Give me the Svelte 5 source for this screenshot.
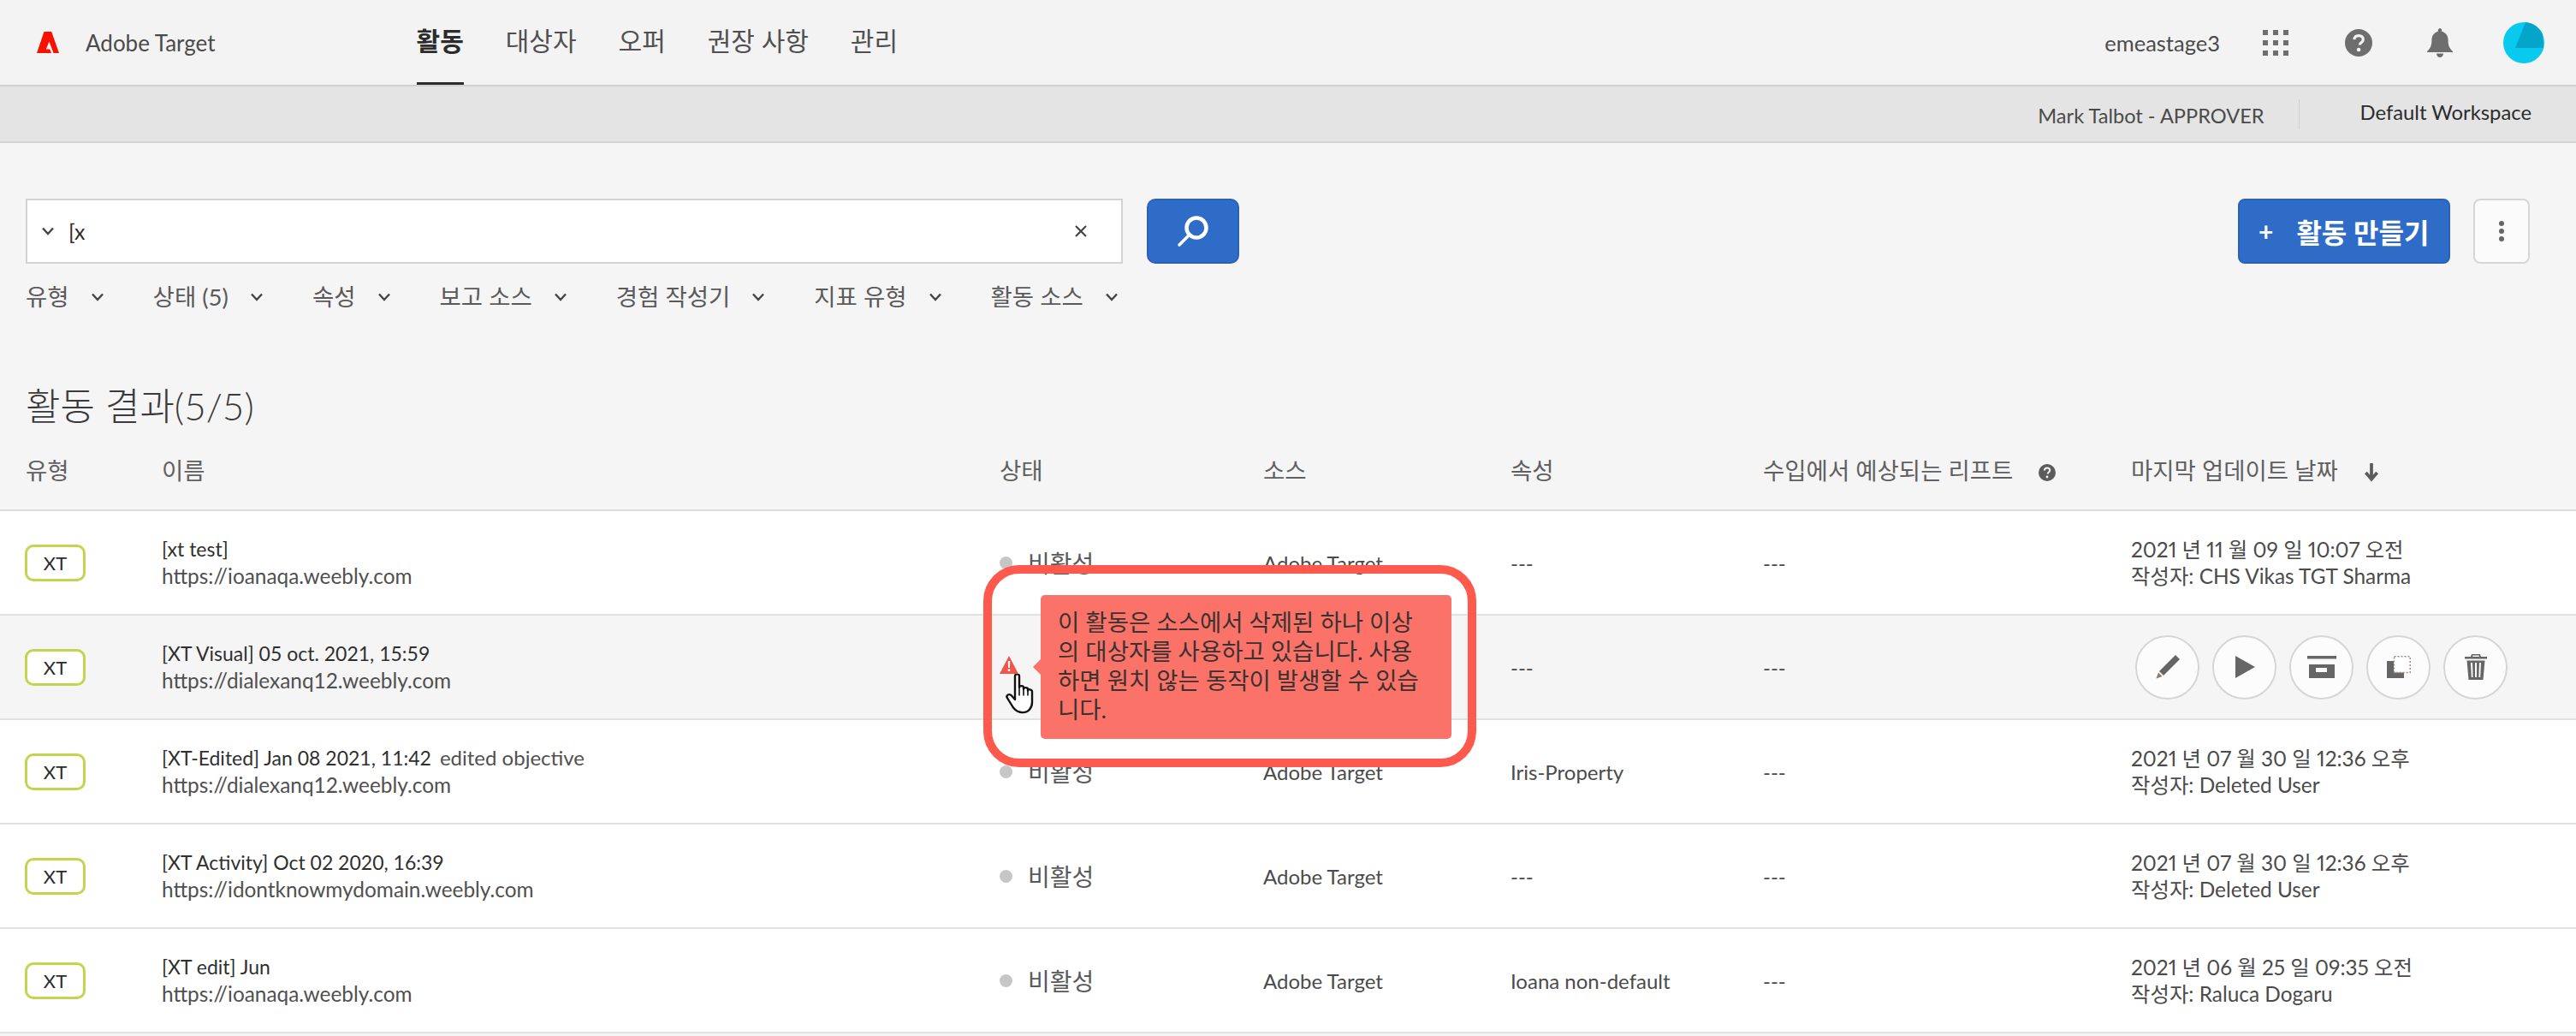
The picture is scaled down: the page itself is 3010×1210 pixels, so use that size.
<script lang="ts">
  const nav = ['활동', '대상자', '오퍼', '권장 사항', '관리'];
  const filters = ['유형', '상태 (5)', '속성', '보고 소스', '경험 작성기', '지표 유형', '활동 소스'];

  const rows = [
    { name: '[xt test]', url: 'https://ioanaqa.weebly.com', prop: '---', date: '2021 년 11 월 09 일 10:07 오전', by: 'CHS Vikas TGT Sharma' },
    { name: '[XT Visual] 05 oct. 2021, 15:59', url: 'https://dialexanq12.weebly.com', prop: '---', hover: true },
    { name: '[XT-Edited] Jan 08 2021, 11:42', note: 'edited objective', url: 'https://dialexanq12.weebly.com', prop: 'Iris-Property', date: '2021 년 07 월 30 일 12:36 오후', by: 'Deleted User' },
    { name: '[XT Activity] Oct 02 2020, 16:39', url: 'https://idontknowmydomain.weebly.com', prop: '---', date: '2021 년 07 월 30 일 12:36 오후', by: 'Deleted User' },
    { name: '[XT edit] Jun', url: 'https://ioanaqa.weebly.com', prop: 'Ioana non-default', date: '2021 년 06 월 25 일 09:35 오전', by: 'Raluca Dogaru' }
  ];
</script>

{#snippet chevron()}
  <svg class="chev" width="16" height="10" viewBox="0 0 16 10" fill="none" stroke="currentColor" stroke-width="2.4"><path d="M2 1.5 8 8l6-6.5"/></svg>
{/snippet}

<div class="page">
  <header class="topbar">
    <svg class="logo" width="26" height="25" viewBox="0 0 26 25" fill="#fa0f00"><path d="M8.500 0H17.200L26 25H19.600L14.500 11.500 10.800 20.600H15.200L17 25H0z"/></svg>
    <span class="product">Adobe Target</span>
    <nav class="nav">
      {#each nav as item, i}
        <span class="nav-item" class:active={i === 0}>{item}</span>
      {/each}
    </nav>
    <div class="top-right">
      <span class="tenant">emeastage3</span>
      <svg class="ic-grid" width="30" height="30" viewBox="0 0 30 30" fill="#6e6e6e">
        <rect x="0" y="0" width="6" height="6"/><rect x="12" y="0" width="6" height="6"/><rect x="24" y="0" width="6" height="6"/>
        <rect x="0" y="12" width="6" height="6"/><rect x="12" y="12" width="6" height="6"/><rect x="24" y="12" width="6" height="6"/>
        <rect x="0" y="24" width="6" height="6"/><rect x="12" y="24" width="6" height="6"/><rect x="24" y="24" width="6" height="6"/>
      </svg>
      <svg class="ic-help" width="32" height="32" viewBox="0 0 32 32">
        <circle cx="16" cy="16" r="16" fill="#6e6e6e"/>
        <path d="M10.800 12.200c.3-2.900 2.400-4.600 5.400-4.600 3 0 5.100 1.700 5.100 4.300 0 2-1.100 3.100-2.500 4.100-1.100.8-1.400 1.300-1.400 2.600" fill="none" stroke="#f3f3f3" stroke-width="3.200"/>
        <circle cx="16.100" cy="24" r="2.300" fill="#f3f3f3"/>
      </svg>
      <svg class="ic-bell" width="30" height="34" viewBox="0 0 30 34" fill="#6e6e6e">
        <path d="M15 0c1.300 0 2.200 1 2.200 2.300v1.500C22 5 24.600 9 24.600 14c0 6 1.500 9.500 5.400 13v1H0v-1c3.900-3.500 5.400-7 5.400-13 0-5 2.600-9 7.400-10.200V2.300C12.800 1 13.700 0 15 0z"/>
        <path d="M11 29.500h8c0 2.500-1.800 4.500-4 4.500s-4-2-4-4.500z"/>
      </svg>
      <svg class="avatar" width="48" height="48" viewBox="0 0 48 48">
        <circle cx="24" cy="24" r="24" fill="#0ac9ef"/>
        <path d="M26 0a24 24 0 0 1 20 14l1 16H14z" fill="#04a5c9"/>
      </svg>
    </div>
  </header>

  <div class="subbar">
    <span class="role">Mark Talbot - APPROVER</span>
    <span class="workspace">Default Workspace</span>
  </div>

  <main class="content">
    <div class="toolbar">
      <div class="search">
        <svg class="search-chev" width="16" height="10" viewBox="0 0 16 10" fill="none" stroke="#444" stroke-width="2.4"><path d="M2 1.500 8 8l6-6.500"/></svg>
        <span class="query">[x</span>
        <svg class="clear" width="16" height="16" viewBox="0 0 16 16" stroke="#444" stroke-width="2.200"><path d="M2 2l12 12M14 2 2 14"/></svg>
      </div>
      <button class="search-btn" type="button" aria-label="검색">
        <svg width="38" height="38" viewBox="0 0 38 38" fill="none" stroke="#fff"><circle cx="23" cy="15" r="11.500" stroke-width="4.500"/><path d="M14.500 23.500 3 35" stroke-width="3.600" stroke-linecap="round"/></svg>
      </button>
      <button class="create" type="button"><span class="plus">+</span>활동 만들기</button>
      <button class="more" type="button" aria-label="더 보기">
        <svg width="6" height="24" viewBox="0 0 6 24" fill="#666"><circle cx="3" cy="3" r="3"/><circle cx="3" cy="12" r="3"/><circle cx="3" cy="21" r="3"/></svg>
      </button>
    </div>

    <div class="filters">
      {#each filters as f}
        <span class="filter">{f}{@render chevron()}</span>
      {/each}
    </div>

    <h1 class="title">활동 결과(5/5)</h1>

    <div class="row head">
      <span>유형</span>
      <span>이름</span>
      <span>상태</span>
      <span>소스</span>
      <span>속성</span>
      <span class="head-lift">수입에서 예상되는 리프트
        <svg width="20" height="20" viewBox="0 0 20 20"><circle cx="10" cy="10" r="10" fill="#5c5c5c"/><path d="M6.800 7.500c.2-1.800 1.500-2.900 3.300-2.900s3.100 1 3.100 2.600c0 1.200-.7 1.900-1.500 2.500-.7.500-.9.800-.9 1.700" fill="none" stroke="#f5f5f5" stroke-width="2"/><circle cx="10" cy="15" r="1.400" fill="#f5f5f5"/></svg>
      </span>
      <span class="head-date">마지막 업데이트 날짜
        <svg width="20" height="22" viewBox="0 0 18 20" fill="none" stroke="#5c5c5c" stroke-width="3.400"><path d="M9 0v16M3 10l6 7 6-7"/></svg>
      </span>
    </div>

    {#each rows as r}
      <div class="row item" class:hover={r.hover}>
        <span><span class="badge">XT</span></span>
        <div class="name">
          <div class="name-line">{r.name}{#if r.note}<span class="note">{r.note}</span>{/if}</div>
          <div class="url">{r.url}</div>
        </div>
        <div class="status">
          {#if r.hover}
            <svg class="warn" width="22" height="21" viewBox="0 0 22 21"><path d="M11 0 22 21H0z" fill="#f0554c"/><path d="M9.800 6h2.400l-.3 8h-1.800zM9.800 15.500h2.400V18H9.800z" fill="#fff"/></svg>
          {:else}
            <i class="dot"></i>
            비활성
          {/if}
        </div>
        <span>{r.hover ? '' : 'Adobe Target'}</span>
        <span>{r.prop}</span>
        <span>---</span>
        {#if r.hover}
          <div class="actions">
            <button class="act" type="button" aria-label="편집">
              <svg width="30" height="30" viewBox="0 0 30 30" fill="#666"><path d="M24 1l5 5L10 25l-5-5z"/><path d="M4 21.500 8.500 26 1.500 28.500z" fill="#8a7a70"/></svg>
            </button>
            <button class="act" type="button" aria-label="활성화">
              <svg width="24" height="26" viewBox="0 0 24 26" fill="#666"><path d="M1 0l23 13L1 26z"/></svg>
            </button>
            <button class="act" type="button" aria-label="보관">
              <svg width="34" height="26" viewBox="0 0 34 26" fill="#666"><path d="M0 0h34v3.500H0z"/><path fill-rule="evenodd" d="M2 10h30v16H2zM10 14v5h13v-5z"/></svg>
            </button>
            <button class="act" type="button" aria-label="복사">
              <svg width="28" height="26" viewBox="0 0 28 26"><path d="M0 6h8v13h12v7H0z" fill="#666"/><path d="M8.500.8h18.700v18.700H8.500z" fill="#fff" stroke="#a88" stroke-width="1.500" stroke-dasharray="2 2"/></svg>
            </button>
            <button class="act" type="button" aria-label="삭제">
              <svg width="26" height="30" viewBox="0 0 26 30" fill="#666"><path d="M8 0h10l1 3h7v2.500H0V3h7zM9.500 1.500 9 3h8l-.5-1.500z"/><path fill-rule="evenodd" d="M2.500 7.500h21L21.500 30h-17zM7 10l.8 17h1.800L9 10zM12 10v17h2V10zM17 10l-.6 17h1.800L19 10z"/></svg>
            </button>
          </div>
        {:else}
          <div class="updated">
            <div>{r.date}</div>
            <div>작성자: {r.by}</div>
          </div>
        {/if}
      </div>
    {/each}
  </main>

  <div class="callout"></div>
  <div class="tooltip">이 활동은 소스에서 삭제된 하나 이상의 대상자를 사용하고 있습니다. 사용하면 원치 않는 동작이 발생할 수 있습니다.</div>
  <svg class="hand" width="36" height="47" viewBox="0 0 36 50" preserveAspectRatio="none">
    <path d="M11 3c0-3.500 5-3.500 5 0v14c0-2.500 5-2.500 5 0v2c0-2.500 5-2.500 5 0v2c0-2.500 5-2 5 1v13c0 7-4 13-11 13-5 0-8-2-11-6L2 30c-2-3 2-6 5-3l4 5z" fill="#fff" stroke="#111" stroke-width="2.400" stroke-linejoin="round"/>
    <path d="M16 17v10M21 19v8M26 21v6" stroke="#111" stroke-width="1.600" fill="none"/>
  </svg>
</div>

<style>
  :global(body) {
    margin: 0;
    background: #f5f5f5;
  }

  .page {
    position: relative;
    width: 3010px;
    height: 1210px;
    overflow: hidden;
    background: #f5f5f5;
    color: #4b4b4b;
    font-family: "Lato", "Noto Sans CJK KR", sans-serif;
    font-size: 24px;
  }

  .topbar {
    display: flex;
    align-items: center;
    height: 101px;
    padding: 0 37px 0 43px;
    box-sizing: border-box;
    background: #f3f3f3;
    border-bottom: 2px solid #d0d0d0;
  }

  .product {
    margin-left: 31px;
    font-size: 26px;
    color: #4b4b4b;
  }

  .nav {
    display: flex;
    gap: 49px;
    margin-left: 235px;
    align-self: stretch;
  }

  .nav-item {
    display: flex;
    align-items: center;
    padding-bottom: 4px;
    box-sizing: border-box;
    font-size: 30px;
    color: #505050;
    border-bottom: 3px solid transparent;
  }

  .nav-item.active {
    font-weight: 700;
    color: #2c2c2c;
    border-bottom-color: #2c2c2c;
  }

  .top-right {
    display: flex;
    align-items: center;
    margin-left: auto;
  }

  .tenant { font-size: 25.500px; }
  .ic-grid { margin-left: 50px; }
  .ic-help { margin-left: 66px; }
  .ic-bell { margin-left: 64px; }
  .avatar { margin-left: 59px; }

  .subbar {
    display: flex;
    align-items: center;
    justify-content: flex-end;
    height: 66px;
    padding-right: 52px;
    box-sizing: border-box;
    background: #e4e4e4;
    border-bottom: 2px solid #d4d4d4;
    font-size: 23.800px;
  }

  .role {
    padding-right: 40px;
    border-right: 1px solid #cfcfcf;
    line-height: 32px;
    padding-top: 3px;
    font-size: 23.600px;
  }

  .workspace {
    margin-left: 71px;
    color: #2c2c2c;
    margin-bottom: 5px;
  }

  .toolbar {
    display: flex;
    align-items: stretch;
    height: 76px;
    margin: 65px 54px 0 30px;
  }

  .search {
    display: flex;
    align-items: center;
    width: 1282px;
    padding: 0 16px;
    box-sizing: border-box;
    background: #fff;
    border: 2px solid #d3d3d3;
  }

  .search-chev { flex: none; }

  .query {
    margin-left: 16px;
    font-size: 25px;
    color: #2c2c2c;
  }

  .clear { margin-left: auto; margin-right: 23px; }

  .search-btn {
    display: flex;
    align-items: center;
    justify-content: center;
    width: 108px;
    margin-left: 28px;
    padding: 0;
    background: #2f6cc8;
    border: 2px solid #2b62b8;
    border-radius: 10px;
  }

  .create {
    display: flex;
    align-items: center;
    width: 248px;
    margin-left: auto;
    padding: 0 0 0 22px;
    box-sizing: border-box;
    background: #2f6cc8;
    border: 2px solid #2b62b8;
    border-radius: 8px;
    color: #fff;
    font: 700 32px "Lato", "Noto Sans CJK KR", sans-serif;
  }

  .plus {
    margin-right: 27px;
    font-size: 30px;
  }

  .more {
    display: flex;
    align-items: center;
    justify-content: center;
    width: 66px;
    margin-left: 27px;
    padding: 0;
    background: #fbfbfb;
    border: 2px solid #d6d6d6;
    border-radius: 8px;
  }

  .filters {
    display: flex;
    margin: 19px 0 0 30px;
    height: 36px;
    align-items: center;
    color: #5a5a5a;
  }

  .filter {
    display: flex;
    align-items: center;
    margin-right: 57px;
    font-size: 27.500px;
  }

  .chev {
    margin-left: 25px;
    margin-top: 4px;
    color: #444;
  }

  .title {
    margin: 81px 0 0 30px;
    font-size: 44px;
    line-height: 60px;
    font-weight: 300;
    color: #3a3a3a;
  }

  .row {
    display: grid;
    grid-template-columns: 159px 979px 308px 289px 295px 430px 1fr;
    align-items: center;
    padding-left: 30px;
  }

  .head {
    height: 93px;
    padding-bottom: 3px;
    box-sizing: border-box;
    color: #606060;
    font-size: 27.500px;
    border-bottom: 2px solid #dcdcdc;
  }

  .head-lift svg { margin-left: 23px; vertical-align: -2px; }
  .head-date svg { margin-left: 22px; vertical-align: -3px; }

  .item {
    height: 122px;
    box-sizing: border-box;
    background: #fff;
    border-bottom: 2px solid #e2e2e2;
    font-size: 24px;
  }

  .item.hover { background: #f5f5f5; }

  .badge {
    display: flex;
    align-items: center;
    justify-content: center;
    width: 71px;
    height: 43px;
    margin-left: -1px;
    box-sizing: border-box;
    border: 3px solid #c3d44e;
    border-radius: 10px;
    background: #fff;
    color: #2c2c2c;
    font-size: 22px;
  }

  .name { line-height: 32px; }
  .name-line { color: #2f2f2f; font-size: 23px; }
  .note { margin-left: 10px; color: #505050; font-size: 24px; }
  .url { color: #505050; font-size: 24.400px; }

  .status {
    display: flex;
    align-items: center;
    color: #5a5a5a;
    font-size: 28px;
  }

  .dot {
    width: 15px;
    height: 15px;
    margin-right: 18px;
    border-radius: 50%;
    background: #c6c6c6;
  }

  .warn { margin-bottom: 6px; }

  .updated {
    line-height: 31px;
    color: #4b4b4b;
    font-size: 24.400px;
    font-variant-numeric: proportional-nums;
  }

  .actions {
    display: flex;
    gap: 15px;
    margin-left: 5px;
  }

  .act {
    display: flex;
    align-items: center;
    justify-content: center;
    width: 75px;
    height: 75px;
    padding: 0;
    background: #fcfcfc;
    border: 2px solid #d6d6d6;
    border-radius: 50%;
  }

  /* annotation drawn on top of the table */
  .callout {
    position: absolute;
    left: 1149px;
    top: 660px;
    width: 576px;
    height: 236px;
    box-sizing: border-box;
    border: 10px solid #fd5a4d;
    border-radius: 42px;
  }

  .tooltip {
    position: absolute;
    left: 1216px;
    top: 695px;
    width: 480px;
    height: 168px;
    padding: 15px 30px 0 20px;
    box-sizing: border-box;
    border-radius: 5px;
    background: #fb7268;
    color: #3a3230;
    font-size: 27.500px;
    line-height: 34px;
    word-break: break-all;
  }

  .tooltip::before {
    content: '';
    position: absolute;
    left: -9px;
    top: 75px;
    border: 9px solid transparent;
    border-left: 0;
    border-right-color: #fb7268;
  }

  .hand {
    position: absolute;
    left: 1175px;
    top: 787px;
  }
</style>
